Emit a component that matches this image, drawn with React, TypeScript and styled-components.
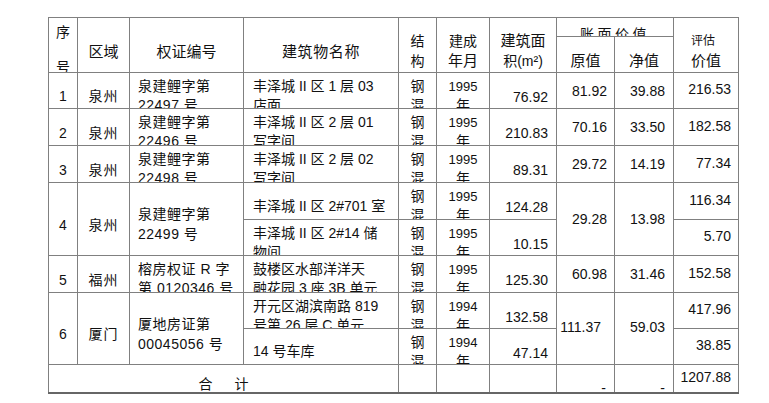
import React from "react";
import styled, { createGlobalStyle } from "styled-components";

const GlobalStyle = createGlobalStyle`
  html, body { margin: 0; padding: 0; background: #ffffff; }
  body {
    font-family: "Liberation Sans", "Noto Sans CJK SC", sans-serif;
    color: #111111;
  }
`;

const Page = styled.div`
  width: 769px;
  height: 403px;
  overflow: hidden;
  box-sizing: border-box;
  padding: 17px 0 0 48px;
`;

const Grid = styled.div`
  display: grid;
  grid-template-columns: 28px 51px 113px 154px 37px 52px 66px 57px 58px 64px;
  grid-template-rows: 18px 35px 35px 36px 36px 36px 35px 36px 35px 35px 27px;
  gap: 1px;
  padding: 1px 1px 0 1px;
  border-bottom: 2px solid #666666;
  background: #808080;
  width: max-content;
`;

type Align = "left" | "center" | "right";

interface CellProps {
  $cs?: number;
  $rs?: number;
  $dy?: number;
  $align?: Align;
  $pl?: number;
  $pr?: number;
}

const Cell = styled.div<CellProps>`
  grid-column: span ${(p) => p.$cs ?? 1};
  grid-row: span ${(p) => p.$rs ?? 1};
  background: #ffffff;
  overflow: hidden;
  min-width: 0;
  min-height: 0;
  box-sizing: border-box;
  display: flex;
  flex-direction: column;
  justify-content: center;
  align-items: ${(p) =>
    p.$align === "left" ? "flex-start" : p.$align === "right" ? "flex-end" : "center"};
  padding-top: ${(p) => Math.max(0, (p.$dy ?? 0) * 2)}px;
  padding-bottom: ${(p) => Math.max(0, -(p.$dy ?? 0) * 2)}px;
  padding-left: ${(p) => p.$pl ?? 0}px;
  padding-right: ${(p) => p.$pr ?? 0}px;
  white-space: nowrap;
`;

const HeadCell = styled(Cell)`
  font-size: 15px;
  line-height: 20px;
`;

const TextCell = styled(Cell)<{ $lh?: number }>`
  font-size: 14px;
  line-height: ${(p) => p.$lh ?? 19}px;
`;

const NumCell = styled(Cell)`
  font-size: 14px;
  line-height: 16px;
`;

const TotalLabel = styled(Cell)`
  flex-direction: row;
  align-items: center;
  justify-content: center;
  gap: 22px;
  font-size: 14px;
  line-height: 16px;
`;

const Line = styled.span<{ $size?: number; $ls?: number; $lh?: number }>`
  display: block;
  flex-shrink: 0;
  ${(p) => (p.$size ? `font-size: ${p.$size}px;` : "")}
  ${(p) => (p.$ls ? `letter-spacing: ${p.$ls}px;` : "")}
  ${(p) => (p.$lh ? `line-height: ${p.$lh}px;` : "")}
`;

const LeftBlock = styled.div`
  display: flex;
  flex-direction: column;
  align-items: flex-start;
`;

interface Sub {
  name: string[];
  year: string;
  area: string;
  evalv: string;
}

interface Row {
  no: string;
  region: string;
  cert: string[];
  subs: Sub[];
  orig: string;
  net: string;
  origPr?: number;
  mergedDy?: number;
}

const rows: Row[] = [
  {
    no: "1",
    region: "泉州",
    cert: ["泉建鲤字第", "22497 号"],
    subs: [{ name: ["丰泽城 II 区 1 层 03", "店面"], year: "1995", area: "76.92", evalv: "216.53" }],
    orig: "81.92",
    net: "39.88",
  },
  {
    no: "2",
    region: "泉州",
    cert: ["泉建鲤字第", "22496 号"],
    subs: [{ name: ["丰泽城 II 区 2 层 01", "写字间"], year: "1995", area: "210.83", evalv: "182.58" }],
    orig: "70.16",
    net: "33.50",
  },
  {
    no: "3",
    region: "泉州",
    cert: ["泉建鲤字第", "22498 号"],
    subs: [{ name: ["丰泽城 II 区 2 层 02", "写字间"], year: "1995", area: "89.31", evalv: "77.34" }],
    orig: "29.72",
    net: "14.19",
  },
  {
    no: "4",
    region: "泉州",
    cert: ["泉建鲤字第", "22499 号"],
    subs: [
      { name: ["丰泽城 II 区 2#701 室"], year: "1995", area: "124.28", evalv: "116.34" },
      { name: ["丰泽城 II 区 2#14 储", "物间"], year: "1995", area: "10.15", evalv: "5.70" },
    ],
    orig: "29.28",
    net: "13.98",
    mergedDy: 0,
  },
  {
    no: "5",
    region: "福州",
    cert: ["榕房权证 R 字", "第 0120346 号"],
    subs: [{ name: ["鼓楼区水部洋洋天", "融花园 3 座 3B 单元"], year: "1995", area: "125.30", evalv: "152.58" }],
    orig: "60.98",
    net: "31.46",
  },
  {
    no: "6",
    region: "厦门",
    cert: ["厦地房证第", "00045056 号"],
    subs: [
      { name: ["开元区湖滨南路 819", "号第 26 层 C 单元"], year: "1994", area: "132.58", evalv: "417.96" },
      { name: ["14 号车库"], year: "1994", area: "47.14", evalv: "38.85" },
    ],
    orig: "111.37",
    net: "59.03",
    origPr: 13,
    mergedDy: -2,
  },
];

function subCells(s: Sub, key: string) {
  return [
    <TextCell key={key + "n"} $align="left" $pl={9} $dy={5}>
      {s.name.map((l, i) => (
        <Line key={i}>{l}</Line>
      ))}
    </TextCell>,
    <TextCell key={key + "s"} $dy={5}>
      <Line>钢</Line>
      <Line>混</Line>
    </TextCell>,
    <TextCell key={key + "y"} $dy={5}>
      <Line $size={13}>{s.year}</Line>
      <Line>年</Line>
    </TextCell>,
    <NumCell key={key + "a"} $align="right" $pr={8} $dy={6}>
      {s.area}
    </NumCell>,
  ];
}

function evalCell(s: Sub, key: string) {
  return (
    <NumCell key={key + "e"} $align="right" $pr={7} $dy={-1.5}>
      {s.evalv}
    </NumCell>
  );
}

function renderRow(r: Row) {
  const n = r.subs.length;
  const k = "r" + r.no;
  const cells: React.ReactNode[] = [
    <TextCell key={k + "no"} $rs={n} $dy={6}>
      {r.no}
    </TextCell>,
    <TextCell key={k + "rg"} $rs={n} $dy={6}>
      <Line $ls={1}>{r.region}</Line>
    </TextCell>,
    <TextCell key={k + "ct"} $rs={n} $align="left" $pl={8} $dy={5} $lh={n > 1 ? 20 : 19}>
      {r.cert.map((l, i) => (
        <Line key={i} $ls={0.5}>
          {l}
        </Line>
      ))}
    </TextCell>,
    ...subCells(r.subs[0], k + "a"),
    <NumCell key={k + "o"} $rs={n} $align="right" $pr={r.origPr ?? 7} $dy={r.mergedDy ?? 0}>
      {r.orig}
    </NumCell>,
    <NumCell key={k + "t"} $rs={n} $align="right" $pr={8} $dy={r.mergedDy ?? 0}>
      {r.net}
    </NumCell>,
    evalCell(r.subs[0], k + "a"),
  ];
  if (n > 1) {
    cells.push(...subCells(r.subs[1], k + "b"), evalCell(r.subs[1], k + "b"));
  }
  return cells;
}

export default function App() {
  return (
    <>
      <GlobalStyle />
      <Page>
        <Grid>
          <HeadCell $rs={2} $dy={5}>
            <Line $size={14} $lh={35}>序</Line>
            <Line $size={14} $lh={35}>号</Line>
          </HeadCell>
          <HeadCell $rs={2} $dy={7}>区域</HeadCell>
          <HeadCell $rs={2} $dy={7}>权证编号</HeadCell>
          <HeadCell $rs={2} $dy={7}>
            <Line $ls={0.6}>建筑物名称</Line>
          </HeadCell>
          <HeadCell $rs={2} $dy={5.5}>
            <Line $size={14}>结</Line>
            <Line $size={14}>构</Line>
          </HeadCell>
          <HeadCell $rs={2} $dy={5.5}>
            <Line $size={14}>建成</Line>
            <Line>年月</Line>
          </HeadCell>
          <HeadCell $rs={2} $dy={5.5}>
            <Line>建筑面</Line>
            <Line $size={14}>积(m²)</Line>
          </HeadCell>
          <HeadCell $cs={2} $dy={7}>
            <Line $size={14} $ls={3.5}>账面价值</Line>
          </HeadCell>
          <HeadCell $rs={2} $dy={5.5}>
            <LeftBlock>
              <Line $size={12}>评估</Line>
              <Line>价值</Line>
            </LeftBlock>
          </HeadCell>
          <HeadCell $dy={6}>原值</HeadCell>
          <HeadCell $dy={6}>净值</HeadCell>

          {rows.map((r) => renderRow(r))}

          <TotalLabel $cs={4} $dy={5}>
            <span>合</span>
            <span>计</span>
          </TotalLabel>
          <Cell />
          <Cell />
          <Cell />
          <NumCell $align="right" $pr={8} $dy={9}>
            -
          </NumCell>
          <NumCell $align="right" $pr={8} $dy={9}>
            -
          </NumCell>
          <NumCell $align="right" $pr={7} $dy={-2}>
            1207.88
          </NumCell>
        </Grid>
      </Page>
    </>
  );
}
